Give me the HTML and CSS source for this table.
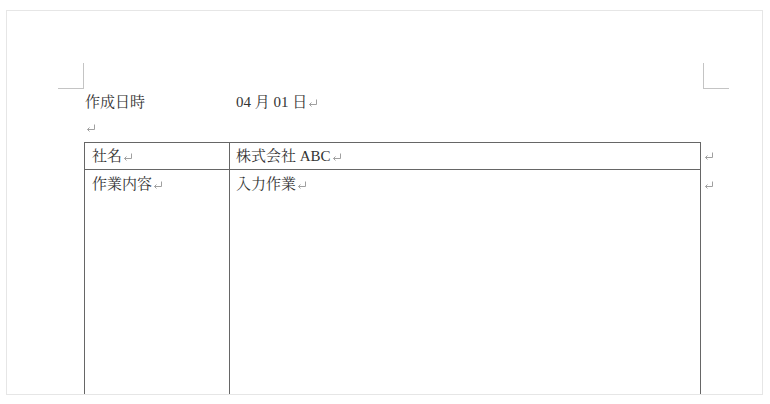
FILE: index.html
```html
<!DOCTYPE html>
<html lang="ja">
<head>
<meta charset="utf-8">
<title>文書</title>
<link rel="stylesheet" href="styles.css">
</head>
<body>
<div class="page">
  <div class="marks">
    <span class="mark mark-left"></span>
    <span class="mark mark-right"></span>
  </div>
  <div class="doc">
    <div class="line date-line">
      <span class="label">作成日時</span>
      <span class="value">04 月 01 日<svg class="ret" viewBox="0 0 10 8" width="10" height="8"><path d="M8.5 0.5V5.5H1.5M3.5 3.5L1.5 5.5L3.5 7.5" fill="none" stroke="#a0a0a0" stroke-width="1"/></svg></span>
    </div>
    <div class="line"><svg class="ret" viewBox="0 0 10 8" width="10" height="8"><path d="M8.5 0.5V5.5H1.5M3.5 3.5L1.5 5.5L3.5 7.5" fill="none" stroke="#a0a0a0" stroke-width="1"/></svg></div>
    <div class="table">
      <div class="cell c1">社名<svg class="ret" viewBox="0 0 10 8" width="10" height="8"><path d="M8.5 0.5V5.5H1.5M3.5 3.5L1.5 5.5L3.5 7.5" fill="none" stroke="#a0a0a0" stroke-width="1"/></svg></div>
      <div class="cell c2">株式会社 ABC<svg class="ret" viewBox="0 0 10 8" width="10" height="8"><path d="M8.5 0.5V5.5H1.5M3.5 3.5L1.5 5.5L3.5 7.5" fill="none" stroke="#a0a0a0" stroke-width="1"/></svg></div>
      <div class="rowend"><svg class="ret" viewBox="0 0 10 8" width="10" height="8"><path d="M8.5 0.5V5.5H1.5M3.5 3.5L1.5 5.5L3.5 7.5" fill="none" stroke="#a0a0a0" stroke-width="1"/></svg></div>
      <div class="cell c1 tall">作業内容<svg class="ret" viewBox="0 0 10 8" width="10" height="8"><path d="M8.5 0.5V5.5H1.5M3.5 3.5L1.5 5.5L3.5 7.5" fill="none" stroke="#a0a0a0" stroke-width="1"/></svg></div>
      <div class="cell c2 tall">入力作業<svg class="ret" viewBox="0 0 10 8" width="10" height="8"><path d="M8.5 0.5V5.5H1.5M3.5 3.5L1.5 5.5L3.5 7.5" fill="none" stroke="#a0a0a0" stroke-width="1"/></svg></div>
      <div class="rowend"><svg class="ret" viewBox="0 0 10 8" width="10" height="8"><path d="M8.5 0.5V5.5H1.5M3.5 3.5L1.5 5.5L3.5 7.5" fill="none" stroke="#a0a0a0" stroke-width="1"/></svg></div>
    </div>
  </div>
</div>
</body>
</html>
```

FILE: styles.css
```css
html, body {
  margin: 0;
  padding: 0;
  background: #ffffff;
}

body {
  font-family: "Liberation Serif", "Noto Serif CJK JP", "Noto Sans CJK JP", serif;
  font-size: 15px;
  color: #333333;
}

.page {
  margin: 10px 0 0 6px;
  width: 755px;
  height: 383px;
  border: 1px solid #e6e6e6;
  overflow: hidden;
  background: #ffffff;
}

.marks {
  display: flex;
  justify-content: space-between;
  margin: 52px 33px 0 51px;
}

.mark {
  display: block;
  width: 25px;
  height: 25px;
  border-bottom: 1px solid #c4c4c4;
}

.mark-left {
  border-right: 1px solid #c4c4c4;
}

.mark-right {
  border-left: 1px solid #c4c4c4;
}

.doc {
  padding-left: 78px;
  line-height: 26px;
}

.line {
  height: 26px;
  display: flex;
  align-items: center;
}

.date-line .label {
  width: 151px;
}

.ret {
  display: inline-block;
  vertical-align: baseline;
  margin-left: 1px;
}

.table {
  display: grid;
  grid-template-columns: 145px 472px 20px;
  margin: 1px 0 0 -1px;
}

.cell {
  border-top: 1px solid #666666;
  border-left: 1px solid #666666;
  height: 26px;
  line-height: 26px;
  white-space: nowrap;
}

.c1 {
  padding-left: 7px;
}

.c2 {
  padding-left: 6px;
  border-right: 1px solid #666666;
}

.cell.tall {
  height: 260px;
  padding-top: 1px;
}

.rowend {
  padding-left: 2px;
  line-height: 26px;
  height: 26px;
}

.tall + .rowend {
  padding-top: 2px;
}
```
